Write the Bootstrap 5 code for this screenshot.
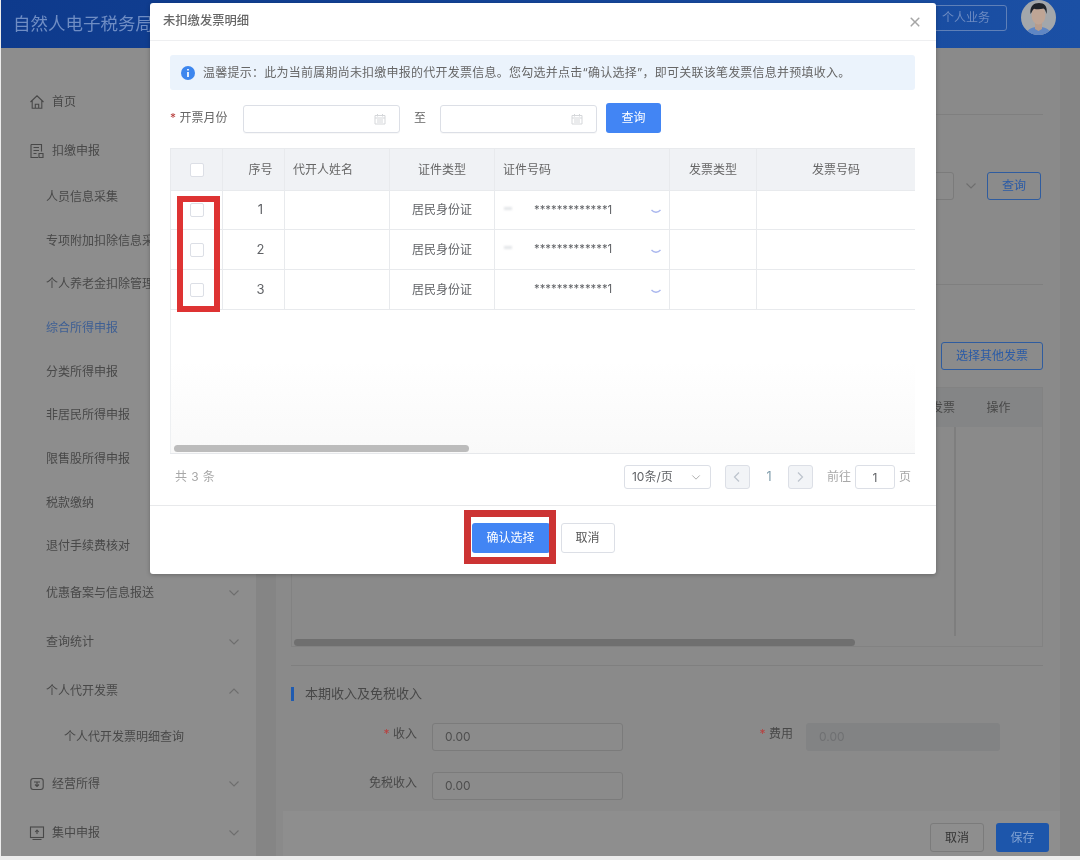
<!DOCTYPE html>
<html lang="zh-CN">
<head>
  <meta charset="utf-8">
  <title>未扣缴发票明细</title>
  <link href="https://cdn.jsdelivr.net/npm/bootstrap@5.3.1/dist/css/bootstrap.min.css" rel="stylesheet">
  <style>
    html, body { height: 860px; overflow: hidden; }
    body { background: #ececec; font-family: Inter, "Noto Sans CJK SC", sans-serif; font-size: 12px; color: #666; }
    svg.ico { display: block; fill: none; stroke: currentColor; }

    /* dimmed page behind the dialog */
    .page-dim { height: 856px; margin-left: 1px; background: #858585; color: #484848; filter: blur(.6px); }
    .top-bar { height: 48px; padding: 0 24px 0 12px; background: linear-gradient(90deg, #0e3a8c, #1b50a5); }
    .top-title { font-size: 17.5px; color: #6f8dc4; }
    .top-btn { width: 82px; height: 26px; margin-top: -13px; border: 1px solid #5f80b8; border-radius: 3px; color: #6d8bc2; text-align: center; line-height: 24px; }
    .top-avatar { width: 35px; height: 35px; margin: -13px 0 0 14px; border-radius: 50%; overflow: hidden; }
    .side-nav { width: 255px; height: 808px; padding-top: 29px; background: #8d8d8d; flex: none; }
    .side-item { height: 49px; padding: 0 16px 0 28px; }
    .side-sub { height: 43.7px; padding-left: 45px; }
    .side-group { padding-left: 45px; }
    .side-leaf { height: 44px; padding-left: 63px; }
    .side-active { color: #3e5f94; }
    .side-item .ico-left { margin-right: 7px; }
    .side-arrow { color: #6e6e6e; }
    .main-pane { width: 784px; height: 808px; margin-left: 20px; padding: 0 17px 0 15px; background: #8a8a8a; position: relative; }
    .hair { border-bottom: 1px solid #7f7f7f; }
    .top-rule { height: 67px; }
    .filter-row { margin-top: 57px; height: 27px; padding-right: 2px; }
    .filter-arrow { margin: 0 10px 0 11px; }
    .dim-input { height: 28px; border: 1px solid #7b7b7b; border-radius: 3px; background: #8b8b8b; padding: 0 12px; line-height: 26px; color: #4e4e4e; }
    .dim-outline { height: 28px; border: 1px solid #2f5c9f; border-radius: 3px; background: #8b8b8b; color: #2b5ba6; text-align: center; line-height: 26px; }
    .dim-table { margin-top: 17px; height: 260px; border: 1px solid #828282; position: relative; }
    .dim-thead { height: 39px; background: #848586; line-height: 39px; }
    .dim-fixed { width: 88px; height: 209px; border-left: 2px solid #7e7e7e; }
    .dim-thumb { position: absolute; left: 2px; top: 251px; width: 561px; height: 7px; border-radius: 4px; background: #6f6f6f; }
    .section-mark { width: 3px; height: 14px; margin-right: 11px; background: #1f5bb0; }
    .section-title { margin-top: 18px; font-size: 13px; }
    .form-line { height: 28px; }
    .star { color: #b8403f; }
    .label-a { width: 126px; margin: 0 15px 6px 0; text-align: right; }
    .label-b { width: 170px; margin: 0 13px 6px 0; text-align: right; }
    .dim-off { background: #828384; border-color: #828384; color: #6f7072; }
    .foot-bar { position: absolute; left: 7px; right: 0; bottom: 0; height: 45px; padding: 8px 11px 0 0; background: #8e8e8e; }
    .foot-cancel { width: 54px; height: 29px; border: 1px solid #7b7b7b; border-radius: 3px; text-align: center; line-height: 27px; color: #333; }
    .foot-save { width: 53px; height: 29px; border-radius: 3px; background: #1d56ab; color: #7fa0d2; text-align: center; line-height: 29px; }

    /* dialog */
    .bill-dialog { position: absolute; left: 150px; top: 3px; width: 786px; height: 571px; }
    .bill-dialog .modal-content { height: 571px; border: 0; border-radius: 3px; background: #fff; filter: blur(.3px); box-shadow: 0 1px 4px rgba(0,0,0,.25); }
    .bill-dialog .modal-header { height: 38px; padding: 0 15px 0 13px; border-bottom: 1px solid #eeeff1; flex: none; }
    .bill-dialog .modal-title { font-size: 12.3px; line-height: 1; color: #666; }
    .bill-dialog .btn-close { width: 12px; height: 12px; padding: 0; margin: 0; background-size: 12px; opacity: .35; }
    .bill-dialog .modal-body { padding: 14px 21px 0 20px; height: 464px; flex: none; }
    .bill-dialog .modal-footer { height: 69px; padding: 17px 0 0; border-top: 1px solid #e8e9eb; align-items: flex-start; justify-content: center; gap: 11px; }
    .bill-dialog .modal-footer > * { margin: 0; }
    .tip-bar { height: 35px; margin: 0; padding: 0 0 0 11px; gap: 8px; border: 0; border-radius: 3px; background: #ebf3fc; color: #666; letter-spacing: .24px; }
    .query-row { margin-top: 13px; height: 30px; }
    .query-label { width: 73px; }
    .date-box { width: 157px; height: 28px; margin-top: 2px; padding: 0 13px; border: 1px solid #dcdfe6; border-radius: 3px; color: #d5d7da; box-shadow: 0 1px 1px rgba(0,0,0,.03); }
    .to-word { width: 40px; text-align: center; }
    .btn-query { width: 55px; height: 30px; margin-left: 9px; padding: 0; border: 0; border-radius: 3px; background: #4285f4; font-size: 12px; }
    .grid-box { margin-top: 15px; height: 306px; position: relative; border-bottom: 1px solid #e6e8eb; background: linear-gradient(#fff 70%, #f9f9f9); box-shadow: inset 1px 0 #eef0f2; overflow: hidden; }
    .bill-table { table-layout: fixed; width: 745px; margin: 0; font-size: 12px; --bs-table-color: #606266; --bs-table-border-color: #e8eaed; --bs-table-bg: transparent; }
    .bill-table > :not(caption) > * > * { padding: 0 8px; vertical-align: middle; }
    .bill-table thead th { height: 42px; background: #f0f2f5; font-weight: 400; color: #666; }
    .row-first td { height: 39px; }
    .row-next td { height: 40px; }
    .bill-table .form-check-input { display: block; float: none; width: 14px; height: 14px; margin: 0 0 0 11px; border-color: #dcdfe6; border-radius: 2px; }
    .num-cell { font-size: 13px; }
    .col-seq { padding-left: 22px !important; }
    .id-mask { position: relative; padding-left: 31px; font-size: 11.3px; }
    .id-smear { position: absolute; left: 1px; top: 5px; width: 8px; height: 3px; background: #e3e5e8; filter: blur(1px); }
    .id-arrow { color: #a9b6ee; margin-top: 3px; }
    .grid-thumb { position: absolute; left: 4px; top: 297px; width: 295px; height: 7px; border-radius: 4px; background: #bcbcbc; }
    .pager-row { margin-top: 11px; height: 24px; }
    .pager-total { padding-left: 5px; color: #a8a8a8; letter-spacing: .4px; }
    .pager-size { width: 87px; height: 24px; padding: 0 0 0 7px; border-color: #dcdfe6; border-radius: 3px; font-size: 12px; color: #606266; background-image: url("data:image/svg+xml,%3csvg xmlns='http://www.w3.org/2000/svg' viewBox='0 0 12 8'%3e%3cpath d='M1.500 1.500 6 6l4.500-4.500' fill='none' stroke='%23a8a8a8' stroke-width='1.100'/%3e%3c/svg%3e"); background-position: right 9px center; background-size: 10px 7px; }
    .pager-step { width: 25px; height: 24px; border: 1px solid #dcdfe6; border-radius: 3px; background: #f2f4f7; color: #bcc3cc; }
    .pager-num { width: 38px; text-align: center; color: #7f9cab; font-size: 12.5px; }
    .pager-jump { width: 40px; height: 24px; margin: 0 4px; padding: 0; border-color: #dcdfe6; border-radius: 3px; text-align: center; font-size: 12px; color: #606266; }
    .pager-word { color: #a8a8a8; }
    .btn-confirm { width: 78px; height: 30px; padding: 0; border: 0; border-radius: 3px; background: #4285f4; font-size: 12px; }
    .btn-dismiss { width: 54px; height: 30px; padding: 0; border: 1px solid #dcdfe6; border-radius: 3px; background: #fff; color: #555; font-size: 12px; }
    .red-frame { position: absolute; border-style: solid; pointer-events: none; }
    .frame-rows { left: 27px; top: 193px; width: 43px; height: 116px; border-width: 6px; border-color: #de3333; }
    .frame-btn { left: 314px; top: 507px; width: 92px; height: 54px; border-width: 7px; border-color: #cc3333; }
  </style>
</head>
<body>
  <svg width="0" height="0" class="position-absolute">
    <symbol id="chev-down" viewBox="0 0 12 8"><path d="M1.5 1.5 6 6l4.5-4.5" fill="none" stroke="currentColor" stroke-width="1.1"/></symbol>
    <symbol id="chev-up" viewBox="0 0 12 8"><path d="M1.5 6.5 6 2l4.5 4.5" fill="none" stroke="currentColor" stroke-width="1.1"/></symbol>
    <symbol id="chev-flat" viewBox="0 0 10 5"><path d="M.5 1C3 4 7 4 9.500 1" fill="none" stroke="currentColor" stroke-width="1.300"/></symbol>
    <symbol id="cal" viewBox="0 0 12 12"><path d="M1 2.5h10v8.5H1zM1 5h10M3.5 1v2.5M8.5 1v2.5M3 7h6M3 9h6" fill="none" stroke="currentColor" stroke-width="1"/></symbol>
  </svg>

  <!-- page behind the dialog -->
  <div class="page-dim">
    <div class="top-bar d-flex align-items-center">
      <div class="top-title flex-grow-1">自然人电子税务局</div>
      <div class="top-btn">个人业务</div>
      <div class="top-avatar">
        <svg width="35" height="35" viewBox="0 0 35 35">
          <rect width="35" height="35" fill="#a3a7ab"/>
          <path d="M5 35c1-7 7-8 12.500-8S29 28 30 35z" fill="#5f86c4"/>
          <path d="M14 22h7v7l-3.500 2-3.500-2z" fill="#b79c8c"/>
          <ellipse cx="17.500" cy="15" rx="7" ry="9.500" fill="#bfa595"/>
          <path d="M9.500 14C8.500 6 13 3 18 3s9 3 7.500 11c-.8-3-1.500-5-3-5.500-3 1-7 1-9.500.2-1.500 1-2 3-3.500 5.300z" fill="#20242b"/>
        </svg>
      </div>
    </div>
    <div class="d-flex">
      <nav class="side-nav">
        <div class="side-item d-flex align-items-center">
          <svg class="ico ico-left" width="16" height="16" viewBox="0 0 16 16"><path d="M1.500 8 8 1.800 14.500 8M3.200 6.700V14.200h9.600V6.700M6.300 14v-3.700h3.400V14" stroke-width="1.100"/></svg>首页
        </div>
        <div class="side-item d-flex align-items-center">
          <svg class="ico ico-left" width="16" height="16" viewBox="0 0 16 16"><path d="M2 1.500h10.500v7M2 1.500v13h7M4.500 4.500h5.500M4.500 7.500h5.500M4.500 10.500h3M10 10.500h4v4h-4z" stroke-width="1.100"/></svg>扣缴申报
        </div>
        <div class="side-item side-sub d-flex align-items-center">人员信息采集</div>
        <div class="side-item side-sub d-flex align-items-center">专项附加扣除信息采集</div>
        <div class="side-item side-sub d-flex align-items-center">个人养老金扣除管理</div>
        <div class="side-item side-sub side-active d-flex align-items-center">综合所得申报</div>
        <div class="side-item side-sub d-flex align-items-center">分类所得申报</div>
        <div class="side-item side-sub d-flex align-items-center">非居民所得申报</div>
        <div class="side-item side-sub d-flex align-items-center">限售股所得申报</div>
        <div class="side-item side-sub d-flex align-items-center">税款缴纳</div>
        <div class="side-item side-sub d-flex align-items-center">退付手续费核对</div>
        <div class="side-item side-group d-flex align-items-center justify-content-between">优惠备案与信息报送<svg class="side-arrow" width="12" height="8"><use href="#chev-down"/></svg></div>
        <div class="side-item side-group d-flex align-items-center justify-content-between">查询统计<svg class="side-arrow" width="12" height="8"><use href="#chev-down"/></svg></div>
        <div class="side-item side-group d-flex align-items-center justify-content-between">个人代开发票<svg class="side-arrow" width="12" height="8"><use href="#chev-up"/></svg></div>
        <div class="side-item side-leaf d-flex align-items-center">个人代开发票明细查询</div>
        <div class="side-item d-flex align-items-center">
          <svg class="ico ico-left" width="16" height="16" viewBox="0 0 16 16"><rect x="1.800" y="2.500" width="12.400" height="11" rx="2.500" stroke-width="1.100"/><path d="M5 6h6M8 6v4M6 8.500 8 10.500l2-2" stroke-width="1.100"/></svg>
          <span class="flex-grow-1">经营所得</span><svg class="side-arrow" width="12" height="8"><use href="#chev-down"/></svg>
        </div>
        <div class="side-item d-flex align-items-center">
          <svg class="ico ico-left" width="16" height="16" viewBox="0 0 16 16"><rect x="1.500" y="2" width="13" height="10.500" stroke-width="1.100"/><path d="M3.500 14.500h9M8 5v4M6.200 7 8 5l1.800 2" stroke-width="1.100"/></svg>
          <span class="flex-grow-1">集中申报</span><svg class="side-arrow" width="12" height="8"><use href="#chev-down"/></svg>
        </div>
      </nav>

      <main class="main-pane">
        <div class="top-rule hair"></div>
        <div class="filter-row d-flex justify-content-end align-items-center">
          <div class="dim-input" style="width:200px"></div>
          <svg class="filter-arrow side-arrow" width="12" height="8"><use href="#chev-down"/></svg>
          <div class="dim-outline" style="width:54px">查询</div>
        </div>
        <div class="hair" style="height:86px"></div>
        <div class="d-flex justify-content-end" style="margin-top:57px">
          <div class="dim-outline" style="width:102px">选择其他发票</div>
        </div>
        <div class="dim-table">
          <div class="dim-thead d-flex justify-content-end">
            <div class="text-end" style="width:60px">发票</div>
            <div class="text-center" style="width:87px">操作</div>
          </div>
          <div class="d-flex justify-content-end"><div class="dim-fixed"></div></div>
          <div class="dim-thumb"></div>
        </div>
        <div class="hair" style="height:19px"></div>
        <div class="section-title d-flex align-items-center"><span class="section-mark"></span>本期收入及免税收入</div>
        <div class="form-line d-flex align-items-center" style="margin-top:19px">
          <div class="label-a"><span class="star">*</span> 收入</div>
          <div class="dim-input" style="width:191px">0.00</div>
          <div class="label-b"><span class="star">*</span> 费用</div>
          <div class="dim-input dim-off" style="width:194px">0.00</div>
        </div>
        <div class="form-line d-flex align-items-center" style="margin-top:21px">
          <div class="label-a">免税收入</div>
          <div class="dim-input" style="width:191px">0.00</div>
        </div>
        <div class="foot-bar d-flex justify-content-end align-items-center gap-2">
          <div class="foot-cancel">取消</div>
          <div class="foot-save ms-1">保存</div>
        </div>
      </main>
    </div>
  </div>

  <!-- dialog -->
  <div class="bill-dialog">
    <div class="modal-content">
      <div class="modal-header justify-content-between">
        <h5 class="modal-title">未扣缴发票明细</h5>
        <button type="button" class="btn-close" aria-label="Close"></button>
      </div>
      <div class="modal-body">
        <div class="alert tip-bar d-flex align-items-center">
          <svg width="14" height="14" viewBox="0 0 14 14"><circle cx="7" cy="7" r="7" fill="#3d86ee"/><path d="M7 3v1.600M7 6v5" stroke="#fff" stroke-width="1.700"/></svg>
          <span>温馨提示：此为当前属期尚未扣缴申报的代开发票信息。您勾选并点击“确认选择”，即可关联该笔发票信息并预填收入。</span>
        </div>
        <div class="query-row d-flex align-items-center">
          <div class="query-label"><span class="star">*</span> 开票月份</div>
          <div class="date-box d-flex align-items-center justify-content-end"><svg width="12" height="12"><use href="#cal"/></svg></div>
          <div class="to-word">至</div>
          <div class="date-box d-flex align-items-center justify-content-end"><svg width="12" height="12"><use href="#cal"/></svg></div>
          <button type="button" class="btn btn-primary btn-query">查询</button>
        </div>
        <div class="grid-box">
          <table class="table table-bordered bill-table">
            <colgroup>
              <col style="width:52px"><col style="width:62px"><col style="width:105px"><col style="width:105px"><col style="width:175px"><col style="width:87px"><col style="width:159px">
            </colgroup>
            <thead>
              <tr>
                <th><input class="form-check-input" type="checkbox" aria-label="全选"></th>
                <th class="text-center col-seq">序号</th>
                <th>代开人姓名</th>
                <th class="text-center">证件类型</th>
                <th>证件号码</th>
                <th class="text-center">发票类型</th>
                <th class="text-center">发票号码</th>
              </tr>
            </thead>
            <tbody>
              <tr class="row-first">
                <td><input class="form-check-input" type="checkbox" aria-label="选择"></td>
                <td class="text-center col-seq num-cell">1</td>
                <td></td>
                <td class="text-center">居民身份证</td>
                <td><div class="d-flex align-items-center justify-content-between"><span class="id-mask"><i class="id-smear"></i>*************1</span><svg class="id-arrow" width="10" height="5"><use href="#chev-flat"/></svg></div></td>
                <td></td>
                <td></td>
              </tr>
              <tr class="row-next">
                <td><input class="form-check-input" type="checkbox" aria-label="选择"></td>
                <td class="text-center col-seq num-cell">2</td>
                <td></td>
                <td class="text-center">居民身份证</td>
                <td><div class="d-flex align-items-center justify-content-between"><span class="id-mask"><i class="id-smear"></i>*************1</span><svg class="id-arrow" width="10" height="5"><use href="#chev-flat"/></svg></div></td>
                <td></td>
                <td></td>
              </tr>
              <tr class="row-next">
                <td><input class="form-check-input" type="checkbox" aria-label="选择"></td>
                <td class="text-center col-seq num-cell">3</td>
                <td></td>
                <td class="text-center">居民身份证</td>
                <td><div class="d-flex align-items-center justify-content-between"><span class="id-mask">*************1</span><svg class="id-arrow" width="10" height="5"><use href="#chev-flat"/></svg></div></td>
                <td></td>
                <td></td>
              </tr>
            </tbody>
          </table>
          <div class="grid-thumb"></div>
        </div>
        <div class="pager-row d-flex align-items-center">
          <div class="pager-total flex-grow-1">共 3 条</div>
          <select class="form-select pager-size" aria-label="每页条数"><option>10条/页</option></select>
          <div class="pager-step d-flex align-items-center justify-content-center" style="margin-left:14px">
            <svg width="8" height="12" viewBox="0 0 8 12"><path d="M6 1.500 1.500 6 6 10.500" fill="none" stroke="currentColor" stroke-width="1.200"/></svg>
          </div>
          <div class="pager-num">1</div>
          <div class="pager-step d-flex align-items-center justify-content-center">
            <svg width="8" height="12" viewBox="0 0 8 12"><path d="M2 1.500 6.500 6 2 10.500" fill="none" stroke="currentColor" stroke-width="1.200"/></svg>
          </div>
          <span class="pager-word" style="margin-left:14px">前往</span>
          <input class="form-control pager-jump" value="1" aria-label="页码">
          <span class="pager-word" style="margin-right:4px">页</span>
        </div>
      </div>
      <div class="modal-footer">
        <button type="button" class="btn btn-primary btn-confirm">确认选择</button>
        <button type="button" class="btn btn-dismiss">取消</button>
      </div>
      <div class="red-frame frame-rows"></div>
      <div class="red-frame frame-btn"></div>
    </div>
  </div>
</body>
</html>
